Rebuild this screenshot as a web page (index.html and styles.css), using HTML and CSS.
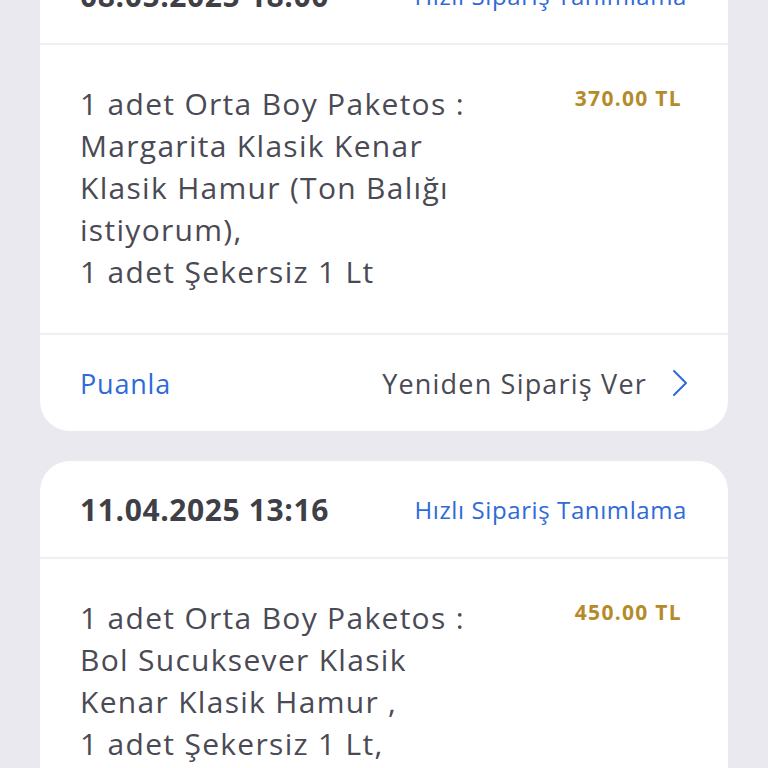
FILE: index.html
```html
<!DOCTYPE html>
<html lang="tr">
<head>
<meta charset="utf-8">
<link rel="stylesheet" href="styles.css">
</head>
<body>
<div class="list">
  <div class="card">
    <div class="head">
      <span class="date">08.05.2025 18:00</span>
      <span class="link">Hızlı Sipariş Tanımlama</span>
    </div>
    <div class="body">
      <div class="items">1 adet Orta Boy Paketos :<br>Margarita Klasik Kenar<br>Klasik Hamur (Ton Balığı<br>istiyorum),<br>1 adet Şekersiz 1 Lt</div>
      <div class="price">370.00 TL</div>
    </div>
    <div class="foot">
      <span class="rate">Puanla</span>
      <span class="reorder">Yeniden Sipariş Ver
        <svg class="chev" width="18" height="28" viewBox="0 0 18 28"><path d="M3 2 L15 14 L3 26" fill="none" stroke="#2f6ad8" stroke-width="2" stroke-linecap="round" stroke-linejoin="round"/></svg>
      </span>
    </div>
  </div>
  <div class="card">
    <div class="head">
      <span class="date">11.04.2025 13:16</span>
      <span class="link">Hızlı Sipariş Tanımlama</span>
    </div>
    <div class="body">
      <div class="items">1 adet Orta Boy Paketos :<br>Bol Sucuksever Klasik<br>Kenar Klasik Hamur ,<br>1 adet Şekersiz 1 Lt,</div>
      <div class="price">450.00 TL</div>
    </div>
  </div>
</div>
</body>
</html>
```
FILE: styles.css
```css
html, body {
  margin: 0;
  padding: 0;
  background: #e9e9ef;
  font-family: "Open Sans", Lato, sans-serif;
  color: #4a4a54;
}
.list {
  display: flex;
  flex-direction: column;
  gap: 30px;
  padding: 0 40px;
  margin-top: -53px;
}
.card {
  background: #ffffff;
  border-radius: 30px;
  overflow: hidden;
}
.head {
  height: 96px;
  display: flex;
  align-items: center;
  justify-content: space-between;
  padding: 0 41px 0 40px;
  border-bottom: 2px solid #f0f0f4;
}
.date {
  font-size: 30px;
  font-weight: 700;
  color: #3f3f47;
  letter-spacing: 0.6px;
}
.link {
  font-size: 24px;
  color: #2f6ad8;
  letter-spacing: 0.6px;
}
.body {
  display: flex;
  justify-content: space-between;
  align-items: flex-start;
  padding: 38px 47px 40px 40px;
}
.items {
  font-size: 30px;
  line-height: 42px;
  white-space: nowrap;
  letter-spacing: 1.3px;
}
.price {
  font-size: 21px;
  line-height: 30px;
  font-weight: 700;
  color: #b58b2a;
  letter-spacing: 1.3px;
  margin-right: -1px;
}
.foot {
  height: 96px;
  display: flex;
  align-items: center;
  justify-content: space-between;
  padding: 0 39px 0 40px;
  border-top: 2px solid #f0f0f4;
}
.rate {
  font-size: 27px;
  color: #2f6ad8;
  letter-spacing: 0.8px;
}
.reorder {
  font-size: 27px;
  color: #4a4a54;
  display: flex;
  align-items: center;
  gap: 24px;
  letter-spacing: 1.2px;
}
.chev {
  display: block;
}
```
